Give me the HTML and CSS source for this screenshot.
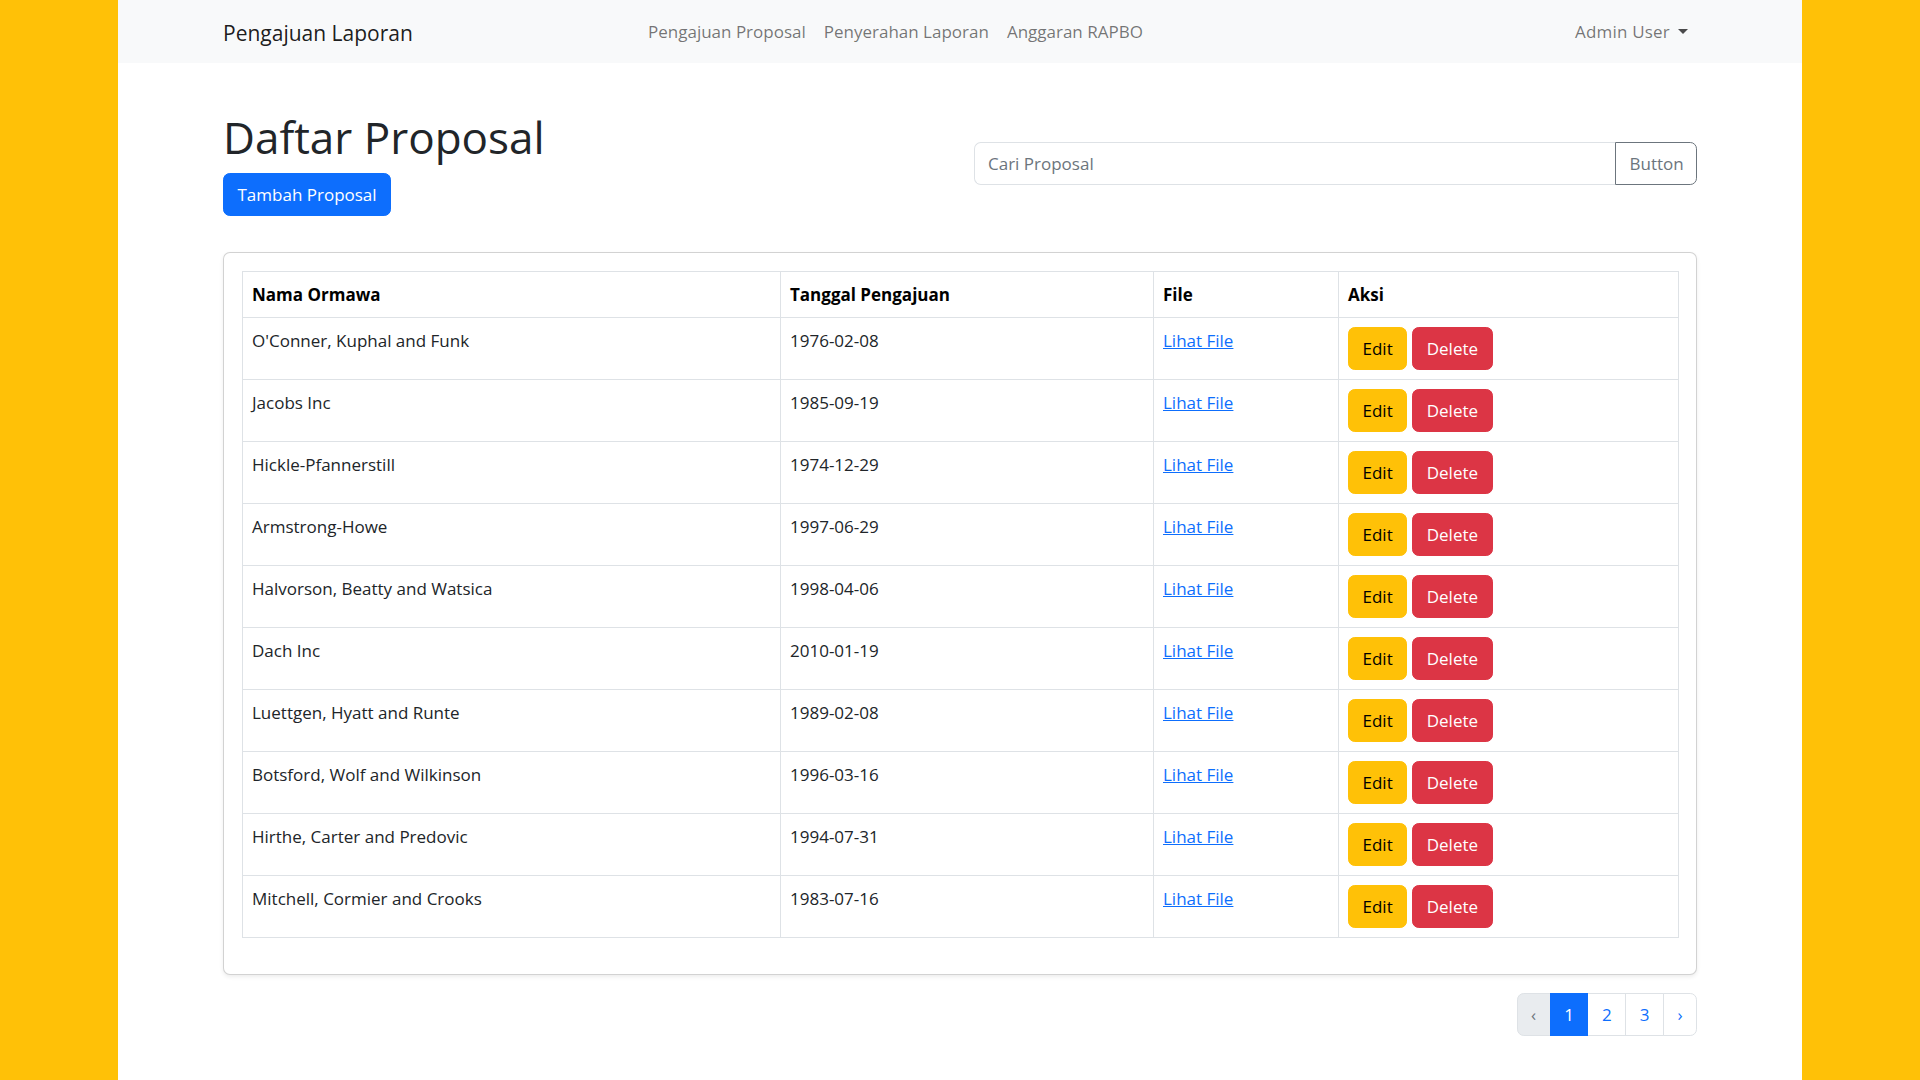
FILE: index.html
```html
<!DOCTYPE html>
<html lang="id">
<head>
<meta charset="utf-8">
<title>Pengajuan Laporan</title>
<link rel="stylesheet" href="styles.css">
</head>
<body>
<div class="page">
  <nav class="navbar">
    <div class="container nav-inner">
      <a class="brand" href="#">Pengajuan Laporan</a>
      <ul class="nav-links">
        <li><a href="#">Pengajuan Proposal</a></li>
        <li><a href="#">Penyerahan Laporan</a></li>
        <li><a href="#">Anggaran RAPBO</a></li>
      </ul>
      <a class="nav-user" href="#">Admin User<span class="caret"></span></a>
    </div>
  </nav>

  <main class="container main">
    <div class="top-row">
      <div class="title-col">
        <h1 class="title">Daftar Proposal</h1>
        <button class="btn btn-primary">Tambah Proposal</button>
      </div>
      <div class="search-col">
        <div class="input-group">
          <input class="search-input" type="text" placeholder="Cari Proposal">
          <button class="btn-search">Button</button>
        </div>
      </div>
    </div>

    <div class="card">
      <div class="card-body">
        <table class="table">
          <colgroup>
            <col class="c1"><col class="c2"><col class="c3"><col class="c4">
          </colgroup>
          <thead>
            <tr><th>Nama Ormawa</th><th>Tanggal Pengajuan</th><th>File</th><th>Aksi</th></tr>
          </thead>
          <tbody>
            <tr><td>O'Conner, Kuphal and Funk</td><td>1976-02-08</td><td><a href="#" class="link">Lihat File</a></td><td><div class="actions"><button class="btn btn-warning">Edit</button><button class="btn btn-danger">Delete</button></div></td></tr>
            <tr><td>Jacobs Inc</td><td>1985-09-19</td><td><a href="#" class="link">Lihat File</a></td><td><div class="actions"><button class="btn btn-warning">Edit</button><button class="btn btn-danger">Delete</button></div></td></tr>
            <tr><td>Hickle-Pfannerstill</td><td>1974-12-29</td><td><a href="#" class="link">Lihat File</a></td><td><div class="actions"><button class="btn btn-warning">Edit</button><button class="btn btn-danger">Delete</button></div></td></tr>
            <tr><td>Armstrong-Howe</td><td>1997-06-29</td><td><a href="#" class="link">Lihat File</a></td><td><div class="actions"><button class="btn btn-warning">Edit</button><button class="btn btn-danger">Delete</button></div></td></tr>
            <tr><td>Halvorson, Beatty and Watsica</td><td>1998-04-06</td><td><a href="#" class="link">Lihat File</a></td><td><div class="actions"><button class="btn btn-warning">Edit</button><button class="btn btn-danger">Delete</button></div></td></tr>
            <tr><td>Dach Inc</td><td>2010-01-19</td><td><a href="#" class="link">Lihat File</a></td><td><div class="actions"><button class="btn btn-warning">Edit</button><button class="btn btn-danger">Delete</button></div></td></tr>
            <tr><td>Luettgen, Hyatt and Runte</td><td>1989-02-08</td><td><a href="#" class="link">Lihat File</a></td><td><div class="actions"><button class="btn btn-warning">Edit</button><button class="btn btn-danger">Delete</button></div></td></tr>
            <tr><td>Botsford, Wolf and Wilkinson</td><td>1996-03-16</td><td><a href="#" class="link">Lihat File</a></td><td><div class="actions"><button class="btn btn-warning">Edit</button><button class="btn btn-danger">Delete</button></div></td></tr>
            <tr><td>Hirthe, Carter and Predovic</td><td>1994-07-31</td><td><a href="#" class="link">Lihat File</a></td><td><div class="actions"><button class="btn btn-warning">Edit</button><button class="btn btn-danger">Delete</button></div></td></tr>
            <tr><td>Mitchell, Cormier and Crooks</td><td>1983-07-16</td><td><a href="#" class="link">Lihat File</a></td><td><div class="actions"><button class="btn btn-warning">Edit</button><button class="btn btn-danger">Delete</button></div></td></tr>
          </tbody>
        </table>
      </div>
    </div>

    <nav class="pager">
      <ul class="pagination">
        <li class="page-item disabled"><span class="page-link">&lsaquo;</span></li>
        <li class="page-item active"><span class="page-link">1</span></li>
        <li class="page-item"><a class="page-link" href="#">2</a></li>
        <li class="page-item"><a class="page-link" href="#">3</a></li>
        <li class="page-item"><a class="page-link" href="#">&rsaquo;</a></li>
      </ul>
    </nav>
  </main>
</div>
</body>
</html>
```

FILE: styles.css
```css
* { box-sizing: border-box; }

html, body { margin: 0; padding: 0; }

body {
  background: #ffc107;
  font-family: "Open Sans", "Noto Sans", "Liberation Sans", sans-serif;
  font-size: 17px;
  line-height: 27px;
  color: #212529;
}

.page {
  width: 1684px;
  min-height: 1080px;
  margin: 0 auto;
  background: #ffffff;
}

.container {
  width: 1474px;
  margin: 0 auto;
}

/* Navbar */
.navbar {
  background: #f8f9fa;
  height: 63px;
}

.nav-inner {
  display: flex;
  align-items: center;
  height: 63px;
}

.brand {
  width: 416px;
  font-size: 21px;
  line-height: 32px;
  padding-top: 2px;
  color: rgba(0, 0, 0, 0.9);
  text-decoration: none;
}

.nav-links {
  list-style: none;
  margin: 0;
  padding: 0;
  display: flex;
}

.nav-links a {
  display: block;
  padding: 9px;
  color: rgba(0, 0, 0, 0.55);
  text-decoration: none;
}

.nav-user {
  margin-left: auto;
  padding: 9px;
  color: rgba(0, 0, 0, 0.55);
  text-decoration: none;
  display: flex;
  align-items: center;
  letter-spacing: 0.2px;
}

.caret {
  display: inline-block;
  margin-left: 8px;
  width: 0;
  height: 0;
  border-top: 5px solid rgba(0, 0, 0, 0.7);
  border-left: 5px solid transparent;
  border-right: 5px solid transparent;
}

/* Main */
.main {
  padding-top: 48px;
}

.top-row {
  display: grid;
  grid-template-columns: 1fr 1fr;
  column-gap: 27px;
  align-items: center;
}

.title {
  margin: 0 0 9px 0;
  font-size: 44px;
  font-weight: 500;
  line-height: 1.2;
  color: #212529;
}

.btn {
  display: inline-block;
  font-family: inherit;
  font-size: 17px;
  line-height: 27px;
  padding: 7px 13.5px;
  border: 1px solid transparent;
  border-radius: 6.75px;
  cursor: pointer;
}

.btn-primary {
  background: #0d6efd;
  border-color: #0d6efd;
  color: #ffffff;
}

.btn-warning {
  background: #ffc107;
  border-color: #ffc107;
  color: #000000;
}

.btn-danger {
  background: #dc3545;
  border-color: #dc3545;
  color: #ffffff;
}

.input-group {
  display: flex;
  height: 43px;
}

.search-input {
  flex: 1;
  min-width: 0;
  font-family: inherit;
  font-size: 17px;
  padding: 7px 13.5px;
  border: 1px solid #dee2e6;
  border-right: none;
  border-radius: 6.75px 0 0 6.75px;
  color: #212529;
  outline: none;
}

.search-input::placeholder {
  color: #6c757d;
}

.btn-search {
  font-family: inherit;
  font-size: 17px;
  line-height: 27px;
  padding: 7px 13.5px;
  background: #ffffff;
  border: 1px solid #6c757d;
  border-radius: 0 6.75px 6.75px 0;
  color: #6c757d;
  width: 82px;
}

/* Card */
.card {
  margin-top: 36px;
  border: 1px solid rgba(0, 0, 0, 0.175);
  border-radius: 7px;
  box-shadow: 0 2px 4px rgba(0, 0, 0, 0.075);
  background: #ffffff;
}

.card-body {
  padding: 18px;
}

.table {
  width: 100%;
  table-layout: fixed;
  border-collapse: collapse;
  margin-bottom: 18px;
}

.c1 { width: 538px; }
.c2 { width: 373px; }
.c3 { width: 185px; }
.c4 { width: 340px; }

.table th,
.table td {
  border: 1px solid #dee2e6;
  padding: 9px;
  text-align: left;
  vertical-align: top;
  color: #212529;
}

.table th {
  font-weight: 700;
  color: #000000;
  vertical-align: bottom;
}

.link {
  color: #0d6efd;
  text-decoration: underline;
}

.actions {
  display: flex;
  gap: 5px;
}

/* Pagination */
.pager {
  display: flex;
  justify-content: flex-end;
  margin-top: 18px;
}

.pagination {
  list-style: none;
  margin: 0;
  padding: 0;
  display: flex;
}

.page-link {
  display: block;
  padding: 7px 13.5px;
  line-height: 27px;
  border: 1px solid #dee2e6;
  margin-left: -1px;
  color: #0d6efd;
  text-decoration: none;
  background: #ffffff;
}

.page-item:first-child .page-link {
  margin-left: 0;
  border-radius: 6.75px 0 0 6.75px;
}

.page-item:last-child .page-link {
  border-radius: 0 6.75px 6.75px 0;
}

.page-item.disabled .page-link {
  background: #e9ecef;
  color: #6c757d;
}

.page-item.active .page-link {
  background: #0d6efd;
  border-color: #0d6efd;
  color: #ffffff;
  position: relative;
}
```
